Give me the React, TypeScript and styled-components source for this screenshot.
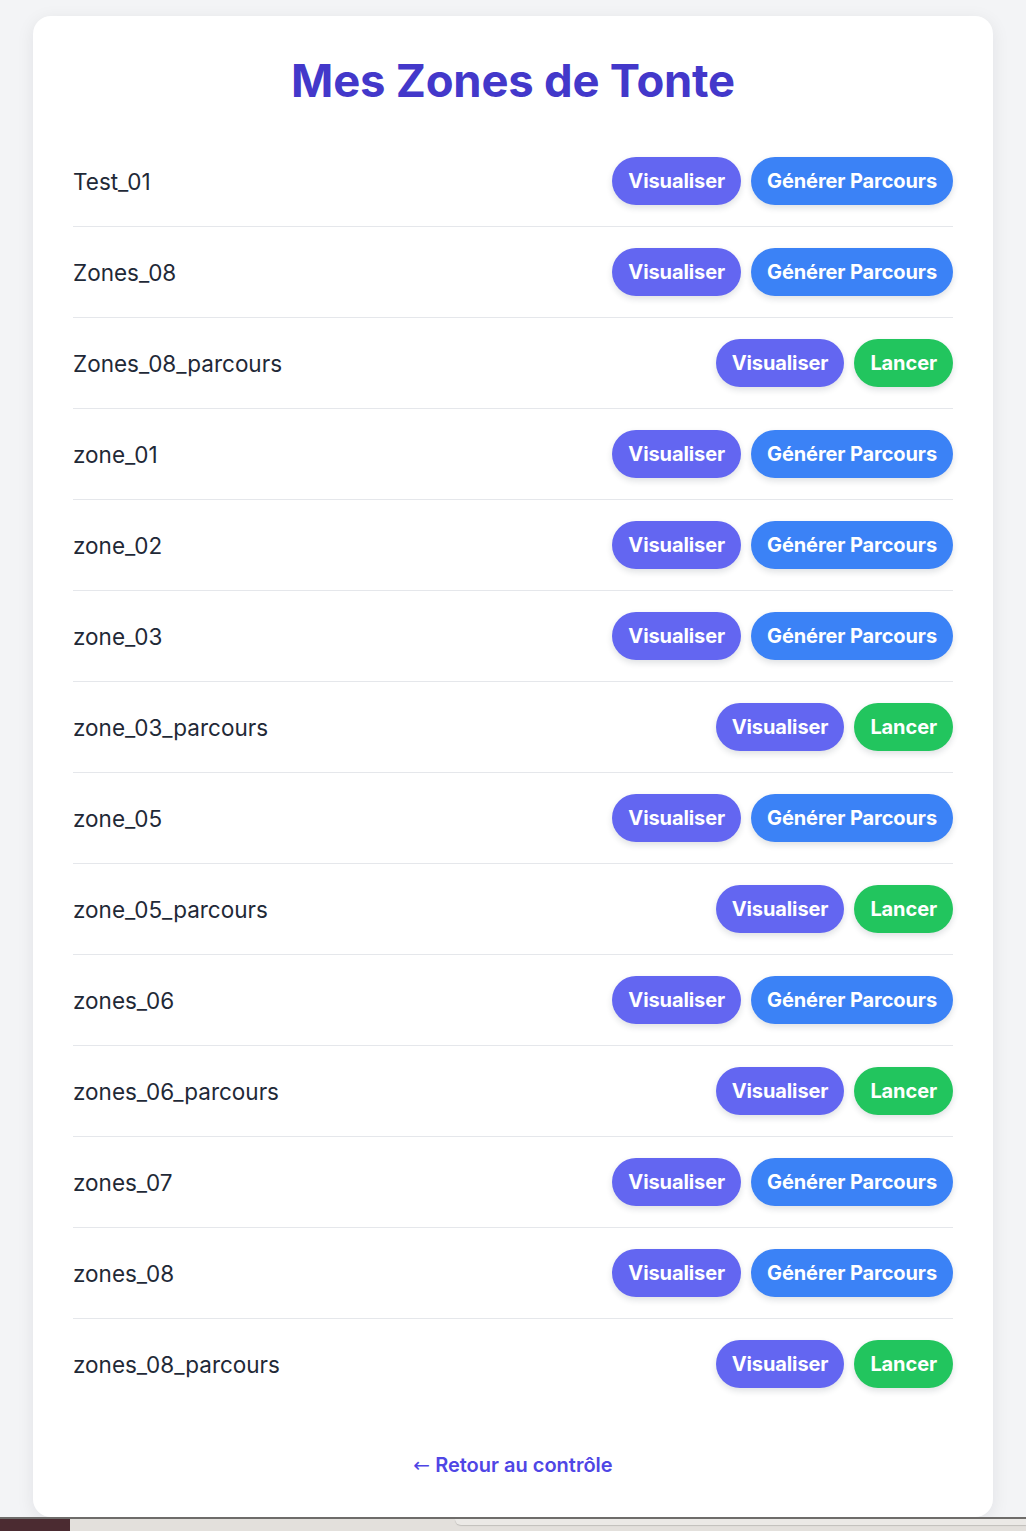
import React from "react";
import styled, { createGlobalStyle } from "styled-components";

const Global = createGlobalStyle`
  html, body { margin: 0; padding: 0; }
  body {
    background: #f3f4f6;
    font-family: Inter, "Noto Sans", "Liberation Sans", sans-serif;
    color: #1f2937;
  }
  #root { min-height: 1531px; display: flex; flex-direction: column; }
`;

const Page = styled.main`
  flex: 1;
  padding: 16px 33px 0;
  display: flex;
  flex-direction: column;
`;

const Card = styled.section`
  flex: 1;
  background: #ffffff;
  border-radius: 18px;
  box-shadow: 0 4px 18px rgba(15, 23, 42, 0.08);
  padding: 40px 40px 40px;
  display: flex;
  flex-direction: column;
`;

const Title = styled.h1`
  margin: 0 0 30px;
  text-align: center;
  font-size: 45.4px;
  line-height: 50px;
  font-weight: 700;
  color: #4338ca;
  letter-spacing: -0.2px;
`;

const List = styled.ul`
  list-style: none;
  margin: 0;
  padding: 0;
`;

const Row = styled.li<{ $last?: boolean }>`
  display: flex;
  align-items: center;
  justify-content: space-between;
  padding: 21px 0;
  border-bottom: ${(p) => (p.$last ? "none" : "1px solid #e5e7eb")};
`;

const Name = styled.span`
  font-size: 22.5px;
  color: #1f2937;
`;

const Actions = styled.div`
  display: flex;
  gap: 10px;
`;

const colors = {
  view: "#6366f1",
  generate: "#3b82f6",
  launch: "#22c55e",
};

const Button = styled.button<{ $kind: keyof typeof colors }>`
  border: none;
  border-radius: 999px;
  background: ${(p) => colors[p.$kind]};
  color: #ffffff;
  font-family: Inter, "Noto Sans", sans-serif;
  font-weight: 700;
  font-size: 20px;
  line-height: 22px;
  letter-spacing: -0.1px;
  padding: 13px 16px;
  box-shadow: 0 3px 6px rgba(30, 41, 59, 0.14);
  cursor: pointer;
`;

const Footer = styled.div`
  margin-top: 44px;
  display: flex;
  justify-content: center;
`;

const BackLink = styled.a`
  font-size: 20px;
  line-height: 24px;
  font-weight: 600;
  color: #4f46e5;
  text-decoration: none;
`;

const Arrow = styled.span`
  font-weight: 400;
  font-family: "DejaVu Sans", sans-serif;
`;

const Strip = styled.div`
  height: 15px;
  display: flex;
  border-top: 2px solid #6e6c6a;
  box-sizing: border-box;
`;

const StripDark = styled.div`
  width: 70px;
  background: #4b2b31;
`;

const StripLight = styled.div`
  flex: 1;
  background: #e3e0dc;
  display: flex;
  padding-left: 385px;
`;

const StripRaised = styled.div`
  flex: 1;
  background: #ebe9e6;
  border-bottom-left-radius: 10px;
  height: 6px;
  box-shadow: 0 1px 1px rgba(0,0,0,0.15);
`;

type Zone = { name: string; parcours: boolean };

const zones: Zone[] = [
  "Test_01",
  "Zones_08",
  "Zones_08_parcours",
  "zone_01",
  "zone_02",
  "zone_03",
  "zone_03_parcours",
  "zone_05",
  "zone_05_parcours",
  "zones_06",
  "zones_06_parcours",
  "zones_07",
  "zones_08",
  "zones_08_parcours",
].map((n) => ({ name: n, parcours: n.endsWith("_parcours") }));

export default function App() {
  return (
    <>
      <Global />
      <Page>
        <Card>
          <Title>Mes Zones de Tonte</Title>
          <List>
            {zones.map((z, i) => (
              <Row key={z.name} $last={i === zones.length - 1}>
                <Name>{z.name}</Name>
                <Actions>
                  <Button $kind="view">Visualiser</Button>
                  {z.parcours ? (
                    <Button $kind="launch">Lancer</Button>
                  ) : (
                    <Button $kind="generate">Générer Parcours</Button>
                  )}
                </Actions>
              </Row>
            ))}
          </List>
          <Footer>
            <BackLink href="#">
              <Arrow>←</Arrow> Retour au contrôle
            </BackLink>
          </Footer>
        </Card>
      </Page>
      <Strip>
        <StripDark />
        <StripLight>
          <StripRaised />
        </StripLight>
      </Strip>
    </>
  );
}
